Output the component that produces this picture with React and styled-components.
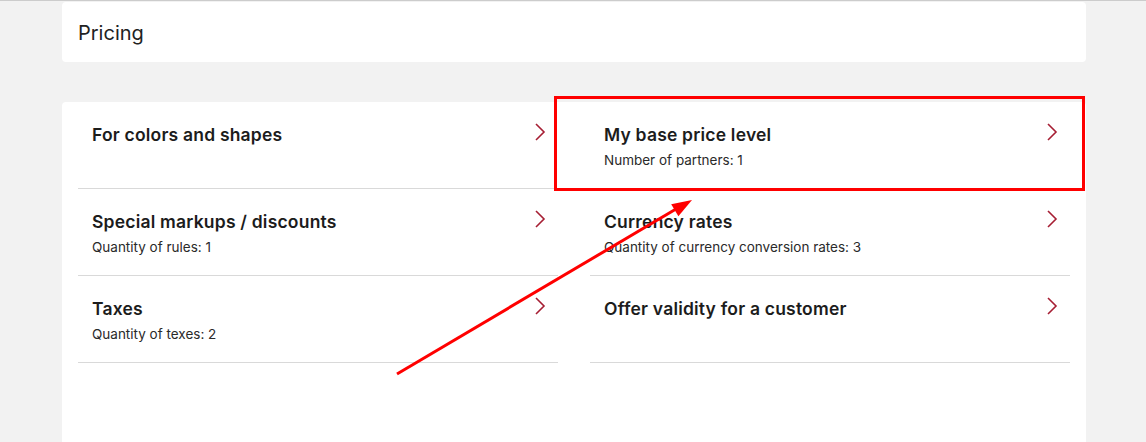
import React from "react";
import styled, { createGlobalStyle } from "styled-components";

const GlobalStyle = createGlobalStyle`
  html, body {
    margin: 0;
    padding: 0;
    background: #f2f2f2;
    font-family: Inter, "Noto Sans", sans-serif;
    color: #1f1f1f;
  }
  * {
    box-sizing: border-box;
  }
`;

const Page = styled.div`
  position: relative;
  min-height: 442px;
  border-top: 1px solid #cccccc;
  padding: 1px 60px 0 62px;
  overflow: hidden;
`;

const HeaderCard = styled.div`
  height: 60px;
  background: #ffffff;
  border-radius: 4px;
  display: flex;
  align-items: center;
  padding: 2px 16px 0;
  font-size: 20px;
  color: #222222;
`;

const MainCard = styled.div`
  margin-top: 40px;
  height: 340px;
  background: #ffffff;
  border-radius: 4px 4px 0 0;
  padding: 0 16px;
  display: grid;
  grid-template-columns: 1fr 1fr;
  column-gap: 32px;
  align-content: start;
`;

const Column = styled.div`
  display: flex;
  flex-direction: column;
`;

const Row = styled.div`
  height: 87px;
  border-bottom: 1px solid #d9d9d9;
  padding: 21px 12px 0 14px;
  display: flex;
  justify-content: space-between;
  align-items: flex-start;
  cursor: pointer;
`;

const Texts = styled.div`
  display: flex;
  flex-direction: column;
  padding-top: 1px;
`;

const Title = styled.div`
  font-size: 17.5px;
  font-weight: 600;
  line-height: 22px;
  letter-spacing: 0.2px;
  color: #1c1c1c;
`;

const Subtitle = styled.div`
  margin-top: 5px;
  font-size: 13.5px;
  line-height: 18px;
  color: #2a2a2a;
`;

const Overlay = styled.svg`
  position: absolute;
  top: 0;
  left: 0;
  pointer-events: none;
`;

const Chevron = () => (
  <svg width="12" height="18" viewBox="0 0 12 18">
    <path d="M2 1 L10 9 L2 17" fill="none" stroke="#a61e33" strokeWidth="1.6" />
  </svg>
);

const left = [
  { title: "For colors and shapes" },
  { title: "Special markups / discounts", sub: "Quantity of rules: 1" },
  { title: "Taxes", sub: "Quantity of texes: 2" },
];

const right = [
  { title: "My base price level", sub: "Number of partners: 1" },
  { title: "Currency rates", sub: "Quantity of currency conversion rates: 3" },
  { title: "Offer validity for a customer" },
];

const Item = ({ title, sub }) => (
  <Row>
    <Texts>
      <Title>{title}</Title>
      {sub && <Subtitle>{sub}</Subtitle>}
    </Texts>
    <Chevron />
  </Row>
);

const App = () => {
  return (
    <>
      <GlobalStyle />
      <Page>
        <HeaderCard>Pricing</HeaderCard>
        <MainCard>
          <Column>
            {left.map((it) => (
              <Item key={it.title} {...it} />
            ))}
          </Column>
          <Column>
            {right.map((it) => (
              <Item key={it.title} {...it} />
            ))}
          </Column>
        </MainCard>
        <Overlay width="1146" height="442" viewBox="0 0 1146 442">
          <rect x="555.5" y="96.5" width="528" height="92" fill="none" stroke="#ff0000" strokeWidth="3" />
          <line x1="397" y1="373" x2="676" y2="208" stroke="#ff0000" strokeWidth="3" />
          <polygon points="692,199 678.4,215.2 671.2,203.2" fill="#ff0000" />
        </Overlay>
      </Page>
    </>
  );
};

export default App;
